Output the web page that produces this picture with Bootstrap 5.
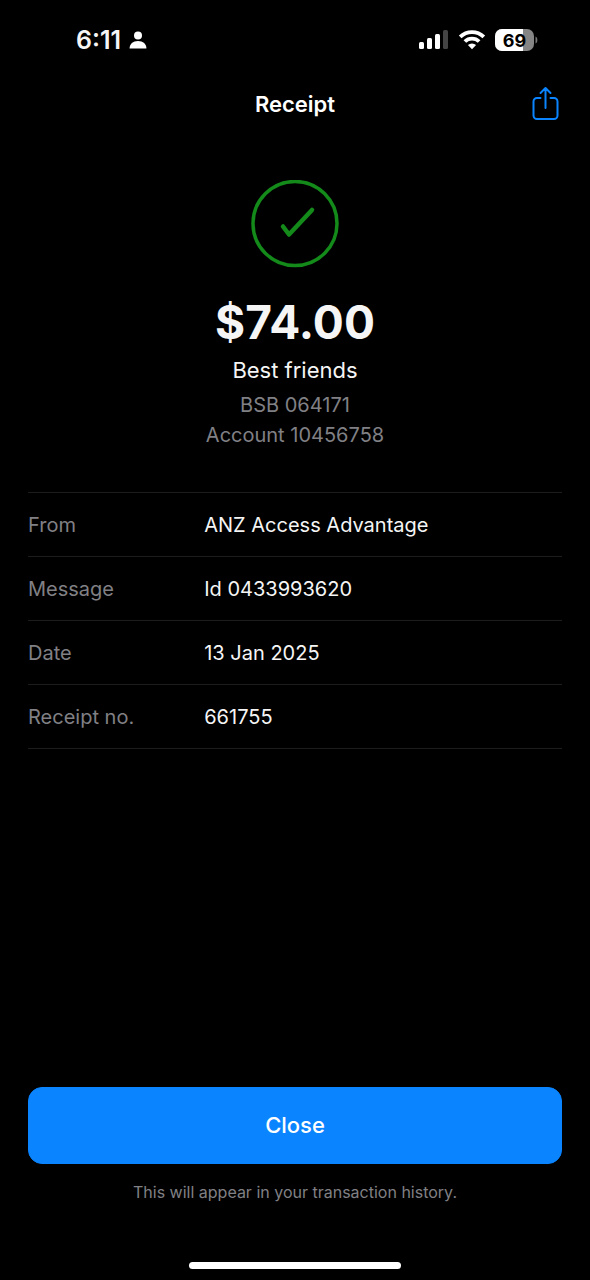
<!DOCTYPE html>
<html lang="en" data-bs-theme="dark">
<head>
<meta charset="utf-8">
<meta name="viewport" content="width=device-width, initial-scale=1">
<title>Receipt</title>
<link href="https://cdn.jsdelivr.net/npm/bootstrap@5.3.0/dist/css/bootstrap.min.css" rel="stylesheet">
<style>
  body { background: #000; color: #f5f5f5; font-family: Inter, "Liberation Sans", sans-serif; font-size: 20px; line-height: 30px; }
  .muted { color: #808085; }
  .gutter { padding-left: 28px; padding-right: 28px; }
  .status-bar { height: 80px; padding: 0 52px 0 76px; }
  .clock { font-size: 25px; font-weight: 600; }
  .title-bar { display: grid; grid-template-columns: 1fr auto 1fr; height: 48px; }
  .title-bar h1 { font-size: 22px; font-weight: 600; }
  .share { color: #0a84ff; line-height: 0; }
  .summary { padding-top: 52px; padding-bottom: 42px; }
  .amount { font-size: 46px; font-weight: 700; line-height: 58px; margin-top: 25px; }
  .payee { font-size: 22px; line-height: 39px; }
  .details { border-top: 1px solid #1c1c1e; }
  .details th, .details td { height: 64px; padding: 0; border-bottom: 1px solid #1c1c1e; font-weight: 400; }
  .details th { width: 33%; }
  .close-button { --bs-btn-bg: #0a84ff; --bs-btn-border-color: #0a84ff; --bs-btn-color: #fff; --bs-btn-font-size: 22px; --bs-btn-border-radius: 14px; --bs-btn-font-weight: 500; height: 77px; }
  .note { font-size: 16px; line-height: 24px; margin-top: 16px; }
  .home-bar { width: 36%; height: 7px; margin-top: 58px; margin-bottom: 11px; background: #fff; }
</style>
</head>
<body>
<div class="min-vh-100 d-flex flex-column">
  <div class="status-bar d-flex align-items-center justify-content-between">
    <div class="d-flex align-items-center gap-1">
      <span class="clock">6:11</span>
      <svg class="ms-1" width="18" height="18" viewBox="0 0 18 18" fill="#fff" aria-hidden="true"><circle cx="9" cy="4.500" r="4"/><path d="M.6 17.500C.4 13 4 10 9 10s8.600 3 8.400 7.500z"/></svg>
    </div>
    <div class="d-flex align-items-center">
      <svg width="30" height="20" viewBox="0 0 30 20" fill="#fff" aria-hidden="true"><rect y="12" width="5" height="7" rx="1.500"/><rect x="8" y="8" width="5" height="11" rx="1.500"/><rect x="16" y="4" width="5" height="15" rx="1.500"/><rect x="24" y="0" width="5" height="19" rx="1.500" fill="#444"/></svg>
      <svg class="ms-2 me-2" width="30" height="22" viewBox="0 0 30 22" aria-hidden="true"><g fill="none" stroke="#fff" stroke-width="3.800"><path d="M3.200 7.800a17 17 0 0 1 23.600 0"/><path d="M7.900 12.500a10.200 10.200 0 0 1 14.200 0"/></g><path d="M10.900 16a6 6 0 0 1 8.200 0L15 20.300z" fill="#fff"/></svg>
      <svg width="43" height="22" viewBox="0 0 43 22" role="img" aria-label="Battery 69 percent"><rect width="39" height="22" rx="7" fill="#858585"/><path d="M7 0h21v22H7a7 7 0 0 1-7-7V7a7 7 0 0 1 7-7z" fill="#fff"/><path d="M40.500 7.500c2.500 .7 2.500 6.300 0 7z" fill="#777"/><text x="19.500" y="17.500" text-anchor="middle" font-family="Inter, sans-serif" font-size="18" font-weight="700" fill="#000">69</text></svg>
    </div>
  </div>
  <header class="title-bar gutter align-items-center">
    <span></span>
    <h1 class="m-0">Receipt</h1>
    <button type="button" class="share btn p-0 border-0 ms-auto" aria-label="Share receipt">
      <svg width="34" height="36" viewBox="0 0 34 36" fill="none" stroke="#0a84ff" stroke-width="2" stroke-linecap="round" stroke-linejoin="round" aria-hidden="true"><path d="M12.500 12H9a3.500 3.500 0 0 0-3.500 3.500v14A3.500 3.500 0 0 0 9 33h17a3.500 3.500 0 0 0 3.500-3.500v-14A3.500 3.500 0 0 0 26 12h-3.500M17.500 22V2M12.500 7l5-5 5 5"/></svg>
    </button>
  </header>
  <main class="flex-grow-1 gutter">
    <section class="summary text-center">
      <svg class="d-block mx-auto" width="88" height="88" viewBox="0 0 88 88" fill="none" stroke="#138a1a" role="img" aria-label="Paid"><circle cx="44" cy="43.500" r="42" stroke-width="3.500"/><path d="M32 46.500 38 54.500 61 30" stroke-width="4.500" stroke-linecap="round" stroke-linejoin="round"/></svg>
      <div class="amount">$74.00</div>
      <div class="payee">Best friends</div>
      <div class="muted">BSB 064171</div>
      <div class="muted">Account 10456758</div>
    </section>
    <table class="details w-100">
      <tbody>
        <tr><th scope="row" class="muted">From</th><td>ANZ Access Advantage</td></tr>
        <tr><th scope="row" class="muted">Message</th><td>Id 0433993620</td></tr>
        <tr><th scope="row" class="muted">Date</th><td>13 Jan 2025</td></tr>
        <tr><th scope="row" class="muted">Receipt no.</th><td>661755</td></tr>
      </tbody>
    </table>
  </main>
  <footer class="gutter text-center">
    <button type="button" class="close-button btn w-100">Close</button>
    <p class="note muted mb-0">This will appear in your transaction history.</p>
  </footer>
  <div class="home-bar rounded-pill mx-auto"></div>
</div>
<script src="https://cdn.jsdelivr.net/npm/bootstrap@5.3.0/dist/js/bootstrap.bundle.min.js"></script>
</body>
</html>
